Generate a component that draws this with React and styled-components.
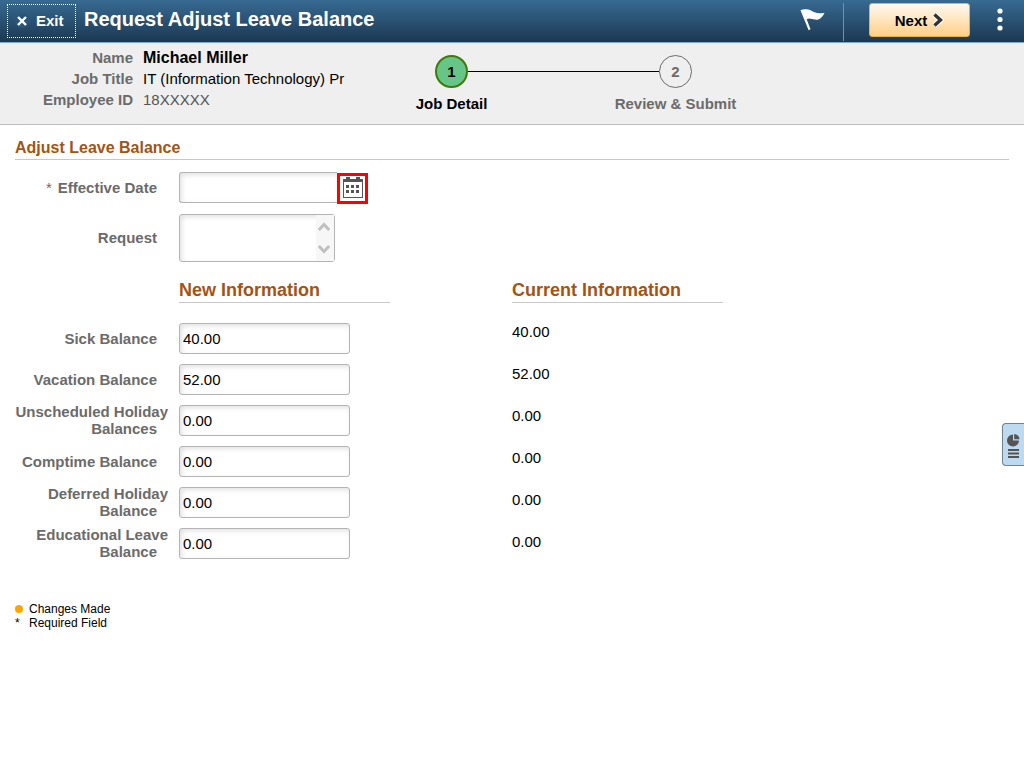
import styled, { createGlobalStyle } from "styled-components";

const GlobalStyle = createGlobalStyle`
  * {
    box-sizing: border-box;
  }
  body {
    margin: 0;
    background: #fff;
    color: #000;
    font-family: "Liberation Sans", Arial, sans-serif;
    font-size: 15px;
  }
`;

const TopBar = styled.header`
  display: flex;
  align-items: flex-start;
  height: 43px;
  padding: 3px 12px 0 7px;
  background: linear-gradient(#386a92, #1b3852);
  border-bottom: 1px solid #7eaad6;
`;

const ExitButton = styled.button`
  display: flex;
  align-items: center;
  gap: 7px;
  width: 69px;
  height: 34px;
  margin-top: 1px;
  padding: 0 0 1px 7px;
  border: 1px dotted #fff;
  background: transparent;
  color: #fff;
  font: bold 15px "Liberation Sans", Arial, sans-serif;
  cursor: pointer;
`;

const PageTitle = styled.h1`
  flex: 1;
  margin: 0 0 0 8px;
  color: #fff;
  font-size: 20px;
  line-height: 32px;
`;

const IconButton = styled.button`
  display: flex;
  align-items: center;
  justify-content: center;
  width: ${(props) => props.$width};
  height: 34px;
  padding: 0;
  border: 0;
  background: transparent;
  cursor: pointer;
`;

const Divider = styled.span`
  width: 1px;
  height: 38px;
  margin: 0 25px 0 17px;
  background: #7890a6;
`;

const NextButton = styled.button`
  display: flex;
  align-items: center;
  justify-content: center;
  gap: 5px;
  width: 101px;
  height: 34px;
  margin-right: 18px;
  padding: 0;
  border: 1px solid #e3b24c;
  border-radius: 3px;
  background: linear-gradient(#fffaf2, #ffcf85);
  color: #000;
  font: bold 15px "Liberation Sans", Arial, sans-serif;
  cursor: pointer;
`;

const SubHeader = styled.div`
  display: flex;
  height: 82px;
  background: #efefef;
  border-bottom: 1px solid #bcbcbc;
`;

const Person = styled.dl`
  display: grid;
  grid-template-columns: 118px 1fr;
  grid-auto-rows: 21px;
  column-gap: 10px;
  align-items: center;
  width: 435px;
  margin: 0;
  padding: 4px 0 0 15px;
`;

const Term = styled.dt`
  color: #6b6b6b;
  font-weight: bold;
  text-align: right;
`;

const Detail = styled.dd`
  margin: 0;
  color: ${(props) => (props.$muted ? "#555" : "#000")};
  font-size: ${(props) => (props.$strong ? "16px" : "15px")};
  font-weight: ${(props) => (props.$strong ? "bold" : "normal")};
`;

const Steps = styled.div`
  display: grid;
  grid-template-columns: 33px 191px 33px;
  grid-template-rows: 33px 20px;
  row-gap: 5px;
  align-items: center;
  justify-items: center;
  padding-top: 12px;
`;

const StepCircle = styled.span`
  display: flex;
  align-items: center;
  justify-content: center;
  width: 33px;
  height: 33px;
  border: ${(props) => (props.$active ? "2px solid #3f7a0a" : "1px solid #6b6b6b")};
  border-radius: 50%;
  background: ${(props) => (props.$active ? "#67c687" : "transparent")};
  color: ${(props) => (props.$active ? "#000" : "#6b6b6b")};
  font-weight: bold;
`;

const StepLine = styled.span`
  width: 100%;
  height: 1px;
  background: #000;
`;

const StepLabel = styled.span`
  grid-column: ${(props) => props.$column};
  color: ${(props) => (props.$active ? "#000" : "#6b6b6b")};
  font-weight: bold;
  white-space: nowrap;
`;

const Main = styled.main`
  padding: 0 15px;
`;

const SectionTitle = styled.h2`
  margin: 0 0 12px;
  padding: 12px 0 1px;
  border-bottom: 1px solid #c8c8c8;
  color: #a35415;
  font-size: 16px;
  line-height: 21px;
`;

const Row = styled.div`
  display: flex;
  align-items: center;
  gap: 11px;
  height: ${(props) => (props.$tall ? "48px" : "31px")};
  margin-bottom: ${(props) => (props.$spaced ? "11px" : "0")};
`;

// The trailing space only applies to the last line of a wrapped label.
const Label = styled.label`
  flex: none;
  width: 153px;
  padding-bottom: 1px;
  color: #6b6b6b;
  font-weight: bold;
  line-height: 17px;
  text-align: right;
  &::after {
    content: "";
    display: inline-block;
    width: 11px;
  }
`;

const Required = styled.span`
  margin-right: 6px;
  font-weight: normal;
`;

const TextInput = styled.input`
  width: ${(props) => props.$width || "171px"};
  height: 31px;
  padding: 0 3px 1px;
  border: 1px solid #b4b4b4;
  border-radius: 3px;
  box-shadow: inset 2px 2px 5px #e2e2e2;
  color: #000;
  font: 15px "Liberation Sans", Arial, sans-serif;
`;

const DateField = styled.div`
  display: flex;
  height: 31px;
`;

const DateInput = styled(TextInput)`
  border-right: 0;
  border-radius: 3px 0 0 3px;
`;

const CalendarButton = styled.button`
  display: flex;
  align-items: center;
  justify-content: center;
  width: 31px;
  height: 31px;
  margin-top: 1px;
  padding: 0 0 2px;
  border: 3px solid #fe0000;
  background: #fff;
  cursor: pointer;
`;

const RequestBox = styled.div`
  display: flex;
  width: 156px;
  height: 48px;
  border: 1px solid #b4b4b4;
  border-radius: 3px;
  box-shadow: inset 2px 2px 5px #e2e2e2;
`;

const RequestInput = styled.textarea`
  flex: 1;
  min-width: 0;
  padding: 4px;
  border: 0;
  background: transparent;
  font: 15px "Liberation Sans", Arial, sans-serif;
  resize: none;
  overflow: hidden;
`;

const Scroller = styled.div`
  display: flex;
  flex-direction: column;
  justify-content: space-between;
  align-items: center;
  width: 18px;
  padding: 7px 2px 7px 0;
  background: #f7f7f7;
`;

const ScrollButton = styled.button`
  display: flex;
  padding: 0;
  border: 0;
  background: transparent;
`;

const Columns = styled.div`
  display: flex;
  gap: 122px;
  margin-top: 17px;
`;

const ColumnTitle = styled.h3`
  width: 211px;
  margin: 0 0 20px ${(props) => (props.$indent ? "164px" : "0")};
  border-bottom: 1px solid #c8c8c8;
  color: #a35415;
  font-size: 18px;
  line-height: 23px;
`;

const BalanceRows = styled.div`
  display: flex;
  flex-direction: column;
  gap: 10px;
`;

const CurrentValues = styled.ul`
  display: flex;
  flex-direction: column;
  gap: 24px;
  margin: 0;
  padding: 0;
  list-style: none;
  line-height: 18px;
`;

const Legend = styled.ul`
  margin: 43px 0 0;
  padding: 0;
  list-style: none;
  font-size: 12px;
  line-height: 14px;
`;

const LegendItem = styled.li`
  display: flex;
  align-items: center;
`;

const LegendMark = styled.span`
  width: 14px;
  height: 14px;
  line-height: 14px;
`;

const Dot = styled.span`
  display: block;
  width: 8px;
  height: 8px;
  margin-top: 3px;
  border-radius: 50%;
  background: #ffa500;
`;

const SideTab = styled.button`
  position: fixed;
  top: 423px;
  right: 0;
  display: flex;
  align-items: center;
  justify-content: center;
  width: 22px;
  height: 43px;
  padding: 2px 0 0;
  border: 1px solid #71838f;
  border-right: 0;
  border-radius: 4px 0 0 4px;
  background: #bddaf0;
  cursor: pointer;
`;

const balances = [
  { id: "sick", label: "Sick Balance", value: "40.00" },
  { id: "vacation", label: "Vacation Balance", value: "52.00" },
  { id: "unscheduled", label: "Unscheduled Holiday Balances", value: "0.00" },
  { id: "comptime", label: "Comptime Balance", value: "0.00" },
  { id: "deferred", label: "Deferred Holiday Balance", value: "0.00" },
  { id: "educational", label: "Educational Leave Balance", value: "0.00" },
];

const CloseIcon = () => (
  <svg width="14" height="14" viewBox="0 0 14 14">
    <circle cx="7" cy="7" r="7" fill="#285579" />
    <path d="M3 3l8 8M11 3l-8 8" stroke="#fff" strokeWidth="2.4" />
  </svg>
);

const FlagIcon = () => (
  <svg width="25" height="22" viewBox="0 0 25 22">
    <path
      d="M0.5 1.2C3 0 7.5-.4 10.5 1.2C13.5 3.2 18 5.4 24.5 3.7C22.5 8.5 19 11.4 15 10.6C12 10 9 8.5 6.7 10.2L10.5 20.3L8.6 21.3Z"
      fill="#fff"
    />
  </svg>
);

const ChevronIcon = () => (
  <svg width="12" height="16" viewBox="0 0 12 16">
    <path d="M2.5 2.5L8.5 8L2.5 13.5" fill="none" stroke="#fff" strokeWidth="5.5" />
    <path d="M2.5 2.5L8.5 8L2.5 13.5" fill="none" stroke="#333" strokeWidth="3.4" />
  </svg>
);

const MoreIcon = () => (
  <svg width="6" height="24" viewBox="0 0 6 24" fill="#fff">
    <circle cx="3" cy="3" r="2.6" />
    <circle cx="3" cy="11.5" r="2.6" />
    <circle cx="3" cy="20" r="2.6" />
  </svg>
);

const CalendarIcon = () => (
  <svg width="20" height="21" viewBox="0 0 20 21" fill="#555">
    <path d="M0 2h3V0h4v2h6V0h4v2h3v19H0zM1 5v15h18V5z" fillRule="evenodd" />
    <path d="M3 8h3v3H3zM8 8h3v3H8zM13 8h3v3h-3zM3 13h3v3H3zM8 13h3v3H8zM13 13h3v3h-3z" />
  </svg>
);

const ArrowIcon = ({ down }) => (
  <svg width="12" height="9" viewBox="0 0 12 9">
    <path
      d={down ? "M.8 1L6 6.5L11.2 1" : "M.8 8L6 2.5L11.2 8"}
      fill="none"
      stroke="#c0c0c0"
      strokeWidth="3"
    />
  </svg>
);

const PanelIcon = () => (
  <svg width="13" height="24" viewBox="0 0 13 24" fill="#555">
    <path d="M6 0.5V6.5H12A6 6 0 1 1 6 0.5z" />
    <path d="M7.2 0a5.5 5.5 0 0 1 5.3 5.3H7.2z" />
    <path d="M1 15h11v2H1zM1 18.5h11v2H1zM1 22h11v2H1z" />
  </svg>
);

const App = () => {
  return (
    <>
      <GlobalStyle />
      <TopBar>
        <ExitButton type="button">
          <CloseIcon />
          Exit
        </ExitButton>
        <PageTitle>Request Adjust Leave Balance</PageTitle>
        <IconButton type="button" $width="28px" aria-label="Notifications">
          <FlagIcon />
        </IconButton>
        <Divider />
        <NextButton type="button">
          Next
          <ChevronIcon />
        </NextButton>
        <IconButton type="button" $width="24px" aria-label="Actions">
          <MoreIcon />
        </IconButton>
      </TopBar>

      <SubHeader>
        <Person>
          <Term>Name</Term>
          <Detail $strong>Michael Miller</Detail>
          <Term>Job Title</Term>
          <Detail>IT (Information Technology) Pr</Detail>
          <Term>Employee ID</Term>
          <Detail $muted>18XXXXX</Detail>
        </Person>
        <Steps>
          <StepCircle $active>1</StepCircle>
          <StepLine />
          <StepCircle>2</StepCircle>
          <StepLabel $column={1} $active>
            Job Detail
          </StepLabel>
          <StepLabel $column={3}>Review &amp; Submit</StepLabel>
        </Steps>
      </SubHeader>

      <Main>
        <SectionTitle>Adjust Leave Balance</SectionTitle>
        <Row $spaced>
          <Label htmlFor="effective-date">
            <Required>*</Required>
            Effective Date
          </Label>
          <DateField>
            <DateInput id="effective-date" $width="158px" />
            <CalendarButton type="button" aria-label="Choose a date">
              <CalendarIcon />
            </CalendarButton>
          </DateField>
        </Row>
        <Row $tall>
          <Label htmlFor="request">Request</Label>
          <RequestBox>
            <RequestInput id="request" />
            <Scroller>
              <ScrollButton type="button" aria-label="Scroll up">
                <ArrowIcon />
              </ScrollButton>
              <ScrollButton type="button" aria-label="Scroll down">
                <ArrowIcon down />
              </ScrollButton>
            </Scroller>
          </RequestBox>
        </Row>

        <Columns>
          <section>
            <ColumnTitle $indent>New Information</ColumnTitle>
            <BalanceRows>
              {balances.map((item) => (
                <Row key={item.id}>
                  <Label htmlFor={item.id}>{item.label}</Label>
                  <TextInput id={item.id} defaultValue={item.value} />
                </Row>
              ))}
            </BalanceRows>
          </section>
          <section>
            <ColumnTitle>Current Information</ColumnTitle>
            <CurrentValues>
              {balances.map((item) => (
                <li key={item.id}>{item.value}</li>
              ))}
            </CurrentValues>
          </section>
        </Columns>

        <Legend>
          <LegendItem>
            <LegendMark>
              <Dot />
            </LegendMark>
            Changes Made
          </LegendItem>
          <LegendItem>
            <LegendMark>*</LegendMark>
            Required Field
          </LegendItem>
        </Legend>
      </Main>

      <SideTab type="button" aria-label="Open related information">
        <PanelIcon />
      </SideTab>
    </>
  );
};

export default App;
